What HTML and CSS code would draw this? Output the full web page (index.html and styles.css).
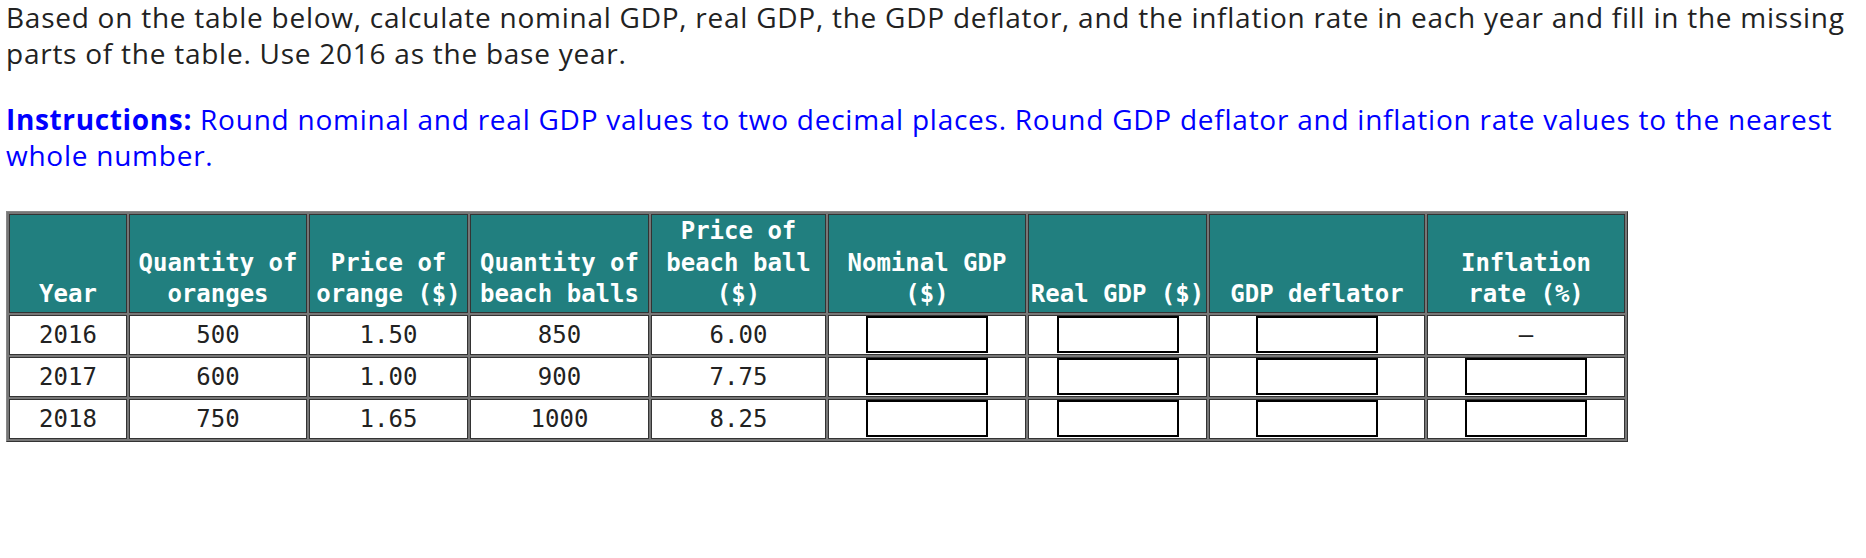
FILE: index.html
```html
<!DOCTYPE html>
<html lang="en">
<head>
<meta charset="utf-8">
<title>GDP table</title>
<link rel="stylesheet" href="styles.css">
</head>
<body>
<div class="page">
  <p class="question">Based on the table below, calculate nominal GDP, real GDP, the GDP deflator, and the inflation rate in each year and fill in the missing parts of the table. Use 2016 as the base year.</p>
  <p class="instructions"><strong>Instructions:</strong> Round nominal and real GDP values to two decimal places. Round GDP deflator and inflation rate values to the nearest whole number.</p>
  <table class="gdp">
    <thead>
      <tr>
        <th class="c-year">Year</th>
        <th class="c-qo">Quantity of<br>oranges</th>
        <th class="c-po">Price of<br>orange ($)</th>
        <th class="c-qb">Quantity of<br>beach balls</th>
        <th class="c-pb">Price of<br>beach ball<br>($)</th>
        <th class="c-nom">Nominal GDP<br>($)</th>
        <th class="c-real">Real GDP ($)</th>
        <th class="c-def">GDP deflator</th>
        <th class="c-inf">Inflation<br>rate (%)</th>
      </tr>
    </thead>
    <tbody>
      <tr>
        <td>2016</td><td>500</td><td>1.50</td><td>850</td><td>6.00</td>
        <td class="in"><input class="box" type="text" aria-label="Nominal GDP 2016"></td>
        <td class="in"><input class="box" type="text" aria-label="Real GDP 2016"></td>
        <td class="in"><input class="box" type="text" aria-label="GDP deflator 2016"></td>
        <td class="dash">–</td>
      </tr>
      <tr>
        <td>2017</td><td>600</td><td>1.00</td><td>900</td><td>7.75</td>
        <td class="in"><input class="box" type="text" aria-label="Nominal GDP 2017"></td>
        <td class="in"><input class="box" type="text" aria-label="Real GDP 2017"></td>
        <td class="in"><input class="box" type="text" aria-label="GDP deflator 2017"></td>
        <td class="in"><input class="box" type="text" aria-label="Inflation rate 2017"></td>
      </tr>
      <tr>
        <td>2018</td><td>750</td><td>1.65</td><td>1000</td><td>8.25</td>
        <td class="in"><input class="box" type="text" aria-label="Nominal GDP 2018"></td>
        <td class="in"><input class="box" type="text" aria-label="Real GDP 2018"></td>
        <td class="in"><input class="box" type="text" aria-label="GDP deflator 2018"></td>
        <td class="in"><input class="box" type="text" aria-label="Inflation rate 2018"></td>
      </tr>
    </tbody>
  </table>
</div>
</body>
</html>
```

FILE: styles.css
```css
html, body {
  margin: 0;
  padding: 0;
  background: #ffffff;
}

.page {
  padding: 0 0 0 6px;
  font-family: "Open Sans", "Liberation Sans", sans-serif;
}

.question,
.instructions {
  margin: 0;
  font-size: 28px;
  line-height: 36px;
  letter-spacing: 0.75px;
}

.question {
  margin-top: -1px;
  color: #222222;
}

.instructions {
  margin-top: 30px;
  color: #0000ff;
}

.instructions strong {
  font-weight: 700;
  letter-spacing: 0.65px;
}

.gdp {
  margin-top: 38px;
  width: 1622px;
  table-layout: fixed;
  border-collapse: separate;
  border-spacing: 2px;
  background: #777777;
  border: 1px solid;
  border-color: #888888 #333333 #333333 #888888;
  font-family: "DejaVu Sans Mono", "Liberation Mono", monospace;
  font-size: 24px;
}

.gdp th,
.gdp td {
  box-sizing: border-box;
  border: 1px solid #333333;
  text-align: center;
}

.gdp th {
  background: #217f7f;
  color: #ffffff;
  font-weight: 700;
  line-height: 31.5px;
  padding: 1px 1px;
  vertical-align: bottom;
}

.gdp td {
  background: #ffffff;
  color: #222222;
  font-weight: 400;
  line-height: 32px;
  padding: 3px 2px;
  vertical-align: middle;
}

.gdp td.in {
  padding: 0;
}

.c-year { width: 118px; }
.c-qo { width: 178px; }
.c-po { width: 159px; }
.c-qb { width: 179px; }
.c-pb { width: 175px; }
.c-nom { width: 198px; }
.c-real { width: 179px; }
.c-def { width: 216px; }
.c-inf { width: 198px; }

.box {
  display: block;
  box-sizing: border-box;
  width: 122px;
  height: 37px;
  margin: 0 auto;
  padding: 0 4px;
  border: 2px solid #000000;
  border-radius: 0;
  background: #ffffff;
  font-family: inherit;
  font-size: 20px;
}
```
